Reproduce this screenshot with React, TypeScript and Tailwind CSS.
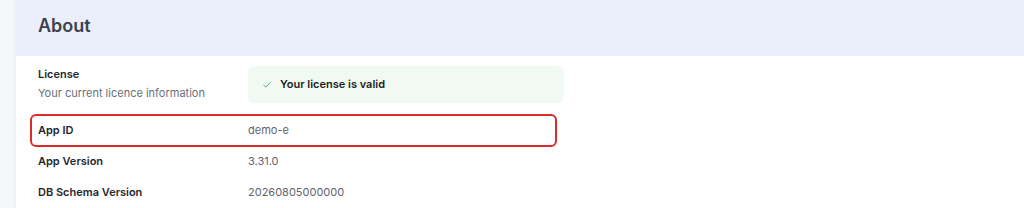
import { Check } from "lucide-react"

interface InfoRow {
  label: string
  value: string
  highlight?: boolean
}

const rows: InfoRow[] = [
  { label: "App ID", value: "demo-e", highlight: true },
  { label: "App Version", value: "3.31.0" },
  { label: "DB Schema Version", value: "20260805000000" },
]

export default function App() {
  return (
    <div
      className="flex h-[208px] w-[1024px] overflow-hidden bg-[#f6f7f9]"
      style={{ fontFamily: "Inter, 'Noto Sans', sans-serif" }}
    >
      <div className="ml-4 flex-1 bg-white shadow-[-2px_0_4px_rgba(0,0,0,0.03)]">
        {/* Header */}
        <div className="flex h-14 items-center bg-[#ebeffb] px-[22px] pb-[5px]">
          <h1 className="text-[18px] font-semibold text-[#3d414d]">About</h1>
        </div>

        <div className="px-[22px] pt-[10px]">
          {/* License */}
          <div className="flex h-[49px] items-start">
            <div className="w-[210px] pt-[1px]">
              <p className="text-[11px] font-semibold leading-[14px] text-[#25272e]">License</p>
              <p className="mt-[5px] text-[11px] leading-[14px] text-[#6b6f7b]">
                Your current licence information
              </p>
            </div>
            <div className="flex h-[37px] w-[316px] items-center rounded-md bg-[#f1faf2] pl-[14px]">
              <Check className="h-[10px] w-[10px] text-[#3f9a54]" strokeWidth={2} />
              <span className="ml-[8px] text-[11px] font-semibold text-[#1b1d22]">
                Your license is valid
              </span>
            </div>
          </div>

          {rows.map((row) => (
            <div key={row.label} className="relative flex h-[31px] items-center">
              {row.highlight && (
                <span className="absolute -top-[1px] -bottom-[1px] -left-[8px] w-[527px] rounded-[6px] border-2 border-[#dc2b2b]" />
              )}
              <span className="w-[210px] text-[11px] font-semibold text-[#25272e]">{row.label}</span>
              <span className="text-[11px] text-[#5f636e]">{row.value}</span>
            </div>
          ))}
        </div>
      </div>
    </div>
  )
}
